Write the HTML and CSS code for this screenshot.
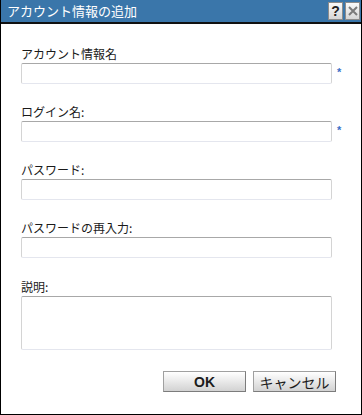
FILE: index.html
```html
<!DOCTYPE html>
<html lang="ja">
<head>
    <meta charset="UTF-8">
    <meta name="viewport" content="width=device-width, initial-scale=1.0">
    <title>アカウント情報の追加</title>
    <link rel="stylesheet" href="styles.css">
</head>
<body>
    <div class="dialogo">
        <div class="barra-titulo">
            <span class="titulo">アカウント情報の追加</span>
            <div class="botones-titulo">
                <span class="btn-titulo ayuda">?</span>
                <span class="btn-titulo cerrar">
                    <svg width="10" height="10" viewBox="0 0 10 10">
                        <path d="M1 1 L9 9 M9 1 L1 9" stroke="#7a7a7a" stroke-width="2"/>
                    </svg>
                </span>
            </div>
        </div>

        <form class="contenido">
            <div class="campo">
                <label class="etiqueta">アカウント情報名</label>
                <div class="fila">
                    <input class="entrada" type="text">
                    <span class="obligatorio">*</span>
                </div>
            </div>
            <div class="campo">
                <label class="etiqueta">ログイン名:</label>
                <div class="fila">
                    <input class="entrada" type="text">
                    <span class="obligatorio">*</span>
                </div>
            </div>
            <div class="campo">
                <label class="etiqueta">パスワード:</label>
                <div class="fila">
                    <input class="entrada" type="password">
                </div>
            </div>
            <div class="campo">
                <label class="etiqueta">パスワードの再入力:</label>
                <div class="fila">
                    <input class="entrada" type="password">
                </div>
            </div>
            <div class="campo campo-texto">
                <label class="etiqueta">説明:</label>
                <div class="fila">
                    <textarea class="entrada area"></textarea>
                </div>
            </div>

            <div class="acciones">
                <button class="boton ok" type="button">OK</button>
                <button class="boton" type="button">キャンセル</button>
            </div>
        </form>
    </div>
</body>
</html>
```

FILE: styles.css
```css
body {
    margin: 0;
    padding: 0;
    background: #ffffff;
}

.dialogo {
    width: 362px;
    height: 415px;
    box-sizing: border-box;
    border: 1px solid #000000;
    border-top: none;
    background: #ffffff;
    display: flex;
    flex-direction: column;
    font-family: "Noto Sans CJK JP", "Liberation Sans", sans-serif;
}

.barra-titulo {
    height: 22px;
    background-color: #3a76aa;
    border-bottom: 2px solid #111111;
    display: flex;
    align-items: center;
    justify-content: space-between;
    padding-left: 6px;
    padding-right: 1px;
}

.titulo {
    color: #ffffff;
    font-size: 13px;
    line-height: 22px;
}

.botones-titulo {
    display: flex;
    gap: 2px;
}

.btn-titulo {
    width: 13px;
    height: 16px;
    border: 1px solid #8c8c8c;
    background: linear-gradient(#fafafa, #d6d6d6);
    display: flex;
    align-items: center;
    justify-content: center;
    font-family: "Liberation Sans", sans-serif;
    font-weight: bold;
    font-size: 14px;
    color: #222222;
}

.contenido {
    margin: 0;
    padding: 22px 0 0 20px;
    display: flex;
    flex-direction: column;
    gap: 20px;
}

.campo {
    display: flex;
    flex-direction: column;
    gap: 2px;
}

.campo-texto {
    margin-top: 1px;
}

.etiqueta {
    font-size: 12px;
    line-height: 15px;
    color: #1a1a1a;
}

.fila {
    display: flex;
    align-items: center;
    gap: 5px;
}

.entrada {
    width: 311px;
    height: 21px;
    box-sizing: border-box;
    margin: 0;
    border: 1px solid #d4d4d4;
    border-top-color: #a8a8a8;
    border-bottom-color: #e4e6ee;
    border-radius: 2px;
    background: #ffffff;
    font-size: 12px;
    outline: none;
}

.area {
    height: 54px;
    resize: none;
}

.obligatorio {
    color: #3a6fc6;
    font-family: "Liberation Sans", sans-serif;
    font-size: 11px;
    font-weight: bold;
    line-height: 10px;
    margin-top: -4px;
}

.acciones {
    display: flex;
    justify-content: flex-end;
    gap: 7px;
    padding-right: 25px;
    margin-top: 1px;
}

.boton {
    width: 83px;
    height: 21px;
    box-sizing: border-box;
    margin: 0;
    padding: 0;
    border: 1px solid #a0a0a0;
    border-right-color: #7c7c7c;
    border-bottom-color: #7c7c7c;
    background: linear-gradient(#ffffff, #e9e9e9 50%, #d2d2d2);
    font-family: "Noto Sans CJK JP", sans-serif;
    font-size: 14px;
    line-height: 18px;
    color: #1c1c1c;
}

.boton.ok {
    font-family: "Liberation Sans", sans-serif;
    font-weight: bold;
    font-size: 14px;
}
```
